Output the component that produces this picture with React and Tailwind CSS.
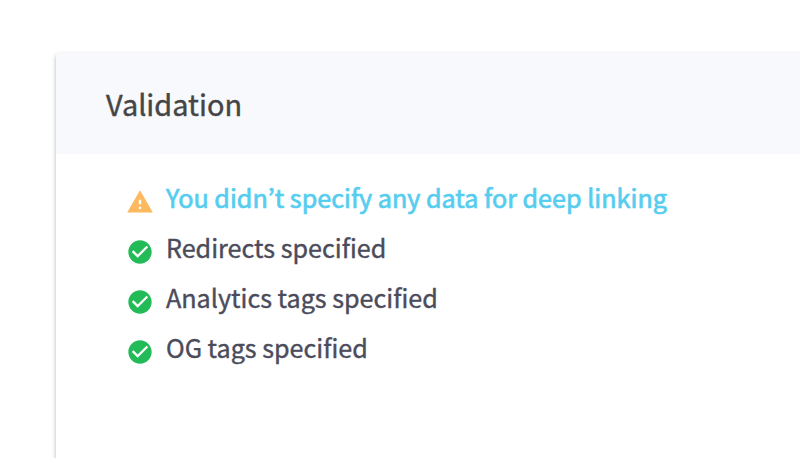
import React from "react";

function WarningIcon() {
  return (
    <svg viewBox="0 0 24 24" className="h-[28px] w-[28px] shrink-0" fill="#fcb95f">
      <path d="M1 21h22L12 2 1 21zm12-3h-2v-2h2v2zm0-4h-2v-4h2v4z" />
    </svg>
  );
}

function CheckIcon() {
  return (
    <svg viewBox="0 0 24 24" className="h-[28px] w-[28px] shrink-0" fill="#23bb58">
      <path d="M12 2C6.48 2 2 6.48 2 12s4.48 10 10 10 10-4.48 10-10S17.52 2 12 2zm-2 15l-5-5 1.41-1.41L10 14.17l7.59-7.59L19 8l-9 9z" />
    </svg>
  );
}

const rows = [
  "Redirects specified",
  "Analytics tags specified",
  "OG tags specified",
];

export default function App() {
  return (
    <div className="h-[458px] w-full overflow-hidden bg-white pt-[53px] pl-14 font-['Noto_Sans_CJK_SC','Noto_Sans',sans-serif]">
      <section className="h-[500px] w-[900px] rounded-[3px] bg-white shadow-[0_2px_4px_rgba(0,0,0,0.3)]">
        <header className="flex h-[101px] items-center rounded-t-[3px] bg-[#f8f9fd] pb-[2px] pl-[50px]">
          <h1 className="text-[28.9px] leading-[40px] text-[#454545] [-webkit-text-stroke:0.4px_#454545]">Validation</h1>
        </header>
        <ul className="pt-[20px] pl-[70px] text-[25.15px] text-[#4b4c5b]">
          <li className="flex h-[50px] items-center">
            <span className="flex w-[28px] justify-center pt-[6px]"><WarningIcon /></span>
            <a className="ml-3 whitespace-nowrap pb-1 leading-[46px] text-[#56cdef] [-webkit-text-stroke:0.7px_#56cdef]">
              You didn<span className="font-['Noto_Sans_CJK_KR']">’</span>t specify any data for deep linking
            </a>
          </li>
          {rows.map((row) => (
            <li key={row} className="flex h-[50px] items-center">
              <span className="flex w-[28px] justify-center pt-[6px]"><CheckIcon /></span>
              <span className="ml-3 whitespace-nowrap pb-1 leading-[46px] [-webkit-text-stroke:0.4px_#4b4c5b]">{row}</span>
            </li>
          ))}
        </ul>
      </section>
    </div>
  );
}
